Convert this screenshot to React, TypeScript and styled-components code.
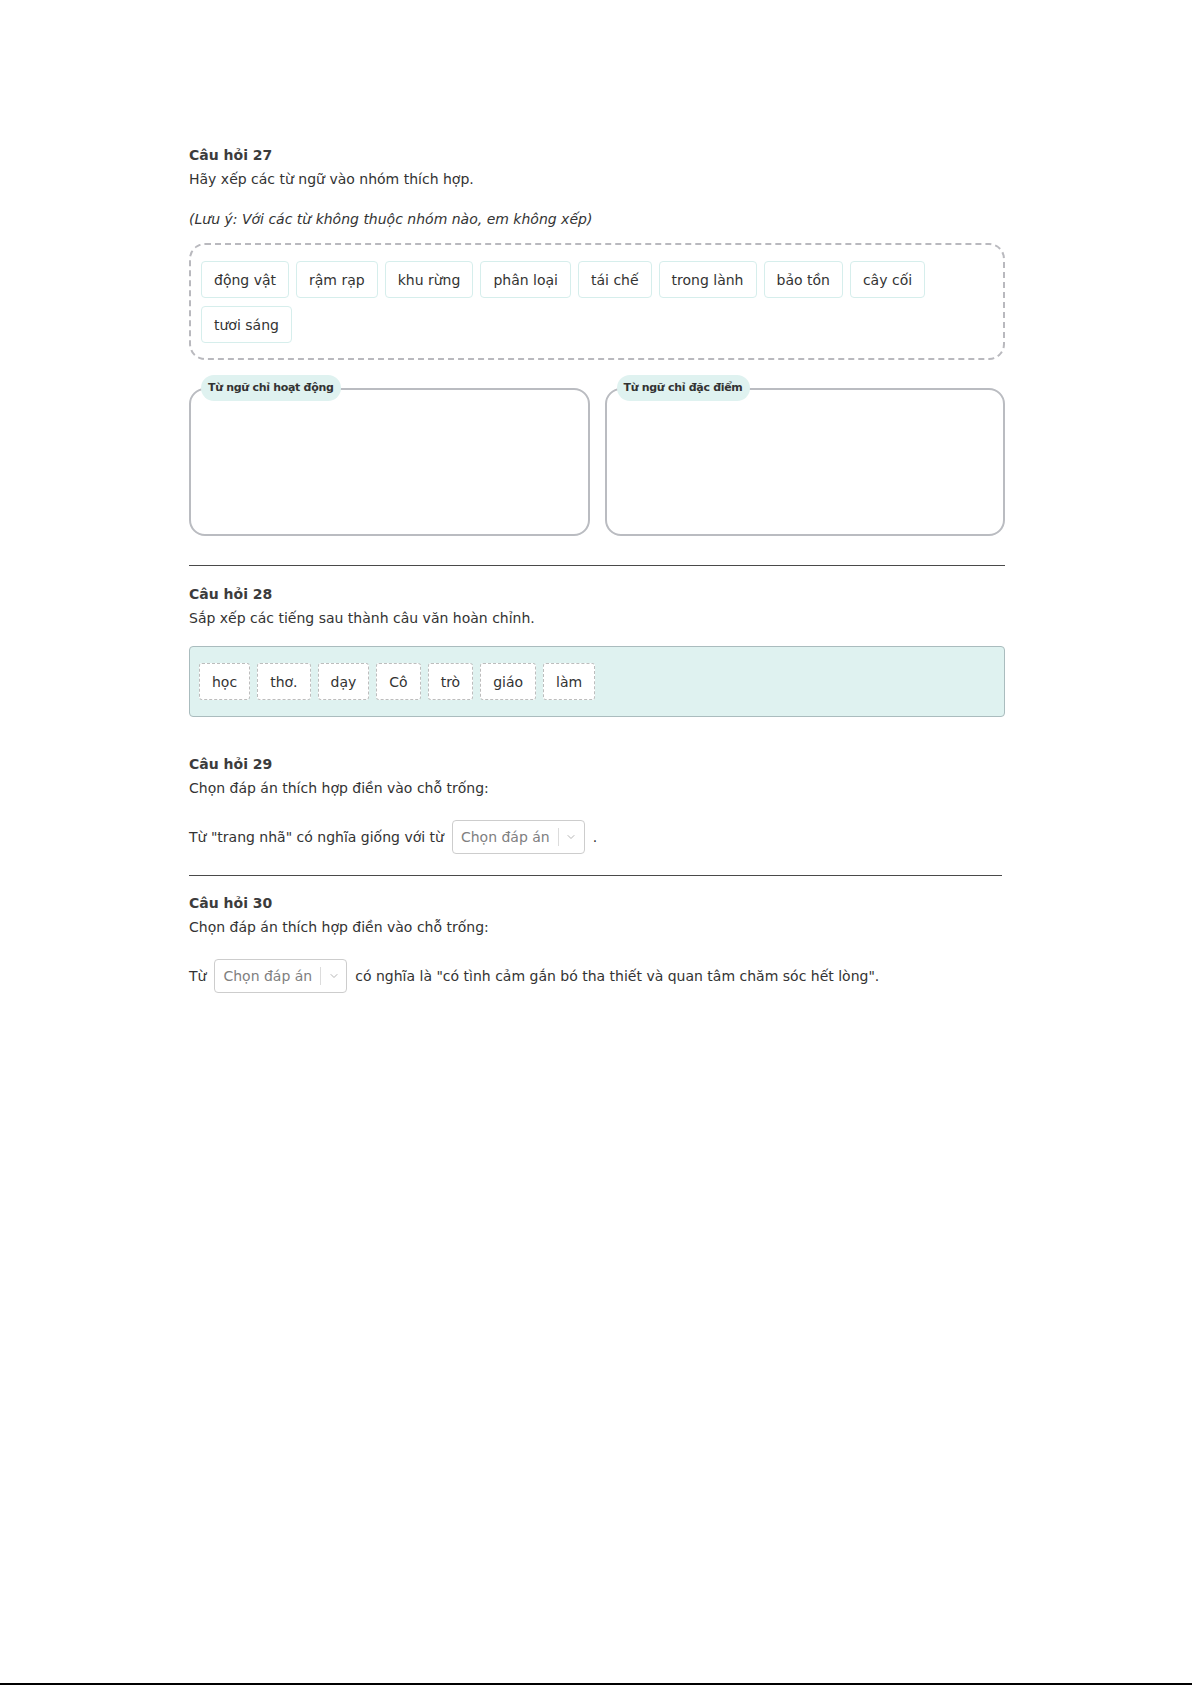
import styled, { createGlobalStyle } from 'styled-components'

const GlobalStyle = createGlobalStyle`
  html, body {
    margin: 0;
    padding: 0;
    background: #fff;
  }
  body {
    font-family: "DejaVu Sans", "Liberation Sans", sans-serif;
    color: #333;
  }
`

const WORDS_27 = ['động vật', 'rậm rạp', 'khu rừng', 'phân loại', 'tái chế', 'trong lành', 'bảo tồn', 'cây cối', 'tươi sáng']
const GROUPS_27 = ['Từ ngữ chỉ hoạt động', 'Từ ngữ chỉ đặc điểm']
const WORDS_28 = ['học', 'thơ.', 'dạy', 'Cô', 'trò', 'giáo', 'làm']

const ChevronDown = () => (
  <svg width="10" height="10" viewBox="0 0 10 10" fill="none">
    <path d="M2 3.5 L5 6.5 L8 3.5" stroke="#b5b5b5" strokeWidth="1" strokeLinecap="round" />
  </svg>
)

const AnswerSelect = () => (
  <SelectBox>
    <SelectText>Chọn đáp án</SelectText>
    <SelectDivider />
    <SelectArrow>
      <ChevronDown />
    </SelectArrow>
  </SelectBox>
)

const App = () => {
  return (
    <Page>
      <GlobalStyle />
      <Content>
        <Question>
          <Title>Câu hỏi 27</Title>
          <Prompt>Hãy xếp các từ ngữ vào nhóm thích hợp.</Prompt>
          <Note>(Lưu ý: Với các từ không thuộc nhóm nào, em không xếp)</Note>
          <WordPool>
            {WORDS_27.map(word => (
              <WordChip key={word}>{word}</WordChip>
            ))}
          </WordPool>
          <GroupGrid>
            {GROUPS_27.map(group => (
              <GroupBox key={group}>
                <GroupLabel>{group}</GroupLabel>
              </GroupBox>
            ))}
          </GroupGrid>
        </Question>

        <Divider />

        <Question>
          <Title>Câu hỏi 28</Title>
          <Prompt>Sắp xếp các tiếng sau thành câu văn hoàn chỉnh.</Prompt>
          <OrderTray>
            {WORDS_28.map(word => (
              <OrderChip key={word}>{word}</OrderChip>
            ))}
          </OrderTray>
        </Question>

        <Question $gap={35}>
          <Title>Câu hỏi 29</Title>
          <Prompt>Chọn đáp án thích hợp điền vào chỗ trống:</Prompt>
          <FillRow>
            <span>Từ "trang nhã" có nghĩa giống với từ</span>
            <AnswerSelect />
            <span>.</span>
          </FillRow>
        </Question>

        <Divider $short />

        <Question>
          <Title>Câu hỏi 30</Title>
          <Prompt>Chọn đáp án thích hợp điền vào chỗ trống:</Prompt>
          <FillRow>
            <span>Từ</span>
            <AnswerSelect />
            <span>có nghĩa là "có tình cảm gắn bó tha thiết và quan tâm chăm sóc hết lòng".</span>
          </FillRow>
        </Question>
      </Content>
    </Page>
  )
}

export default App

const Page = styled.div`
  box-sizing: border-box;
  height: 1685px;
  border-bottom: 2px solid #000;
  overflow: hidden;
`

const Content = styled.main`
  width: 816px;
  margin-left: 189px;
  padding-top: 143px;
  font-size: 14px;
  line-height: 24px;
`

const Question = styled.section<{ $gap?: number }>`
  margin-top: ${({ $gap }) => $gap ?? 0}px;
`

const Title = styled.h3`
  margin: 0;
  font-size: 14px;
  font-weight: 700;
  line-height: 24px;
  color: #3c3c3c;
`

const Prompt = styled.p`
  margin: 0;
  line-height: 24px;
`

const Note = styled.p`
  margin: 16px 0 0;
  font-style: italic;
  line-height: 24px;
`

const WordPool = styled.div`
  box-sizing: border-box;
  display: flex;
  flex-wrap: wrap;
  gap: 8px 7px;
  margin-top: 12px;
  padding: 16px 10px 15px;
  border: 2px dashed #b9b9be;
  border-radius: 16px;
`

const WordChip = styled.span`
  box-sizing: border-box;
  display: inline-flex;
  align-items: center;
  height: 37px;
  padding: 0 12px;
  border: 1px solid #d6eeec;
  border-radius: 4px;
  background: #fff;
`

const GroupGrid = styled.div`
  display: grid;
  grid-template-columns: 1fr 1fr;
  gap: 15px;
  margin-top: 28px;
`

const GroupBox = styled.div`
  box-sizing: border-box;
  position: relative;
  height: 148px;
  border: 2px solid #babcc1;
  border-radius: 16px;
  background: #fff;
`

const GroupLabel = styled.span`
  position: absolute;
  top: -15px;
  left: 10px;
  display: inline-flex;
  align-items: center;
  height: 26px;
  padding: 0 7px;
  border-radius: 13px;
  background: #dff2f0;
  font-size: 11px;
  font-weight: 700;
  letter-spacing: -0.3px;
  color: #333;
`

const Divider = styled.hr<{ $short?: boolean }>`
  width: ${({ $short }) => ($short ? '813px' : '100%')};
  margin: ${({ $short }) => ($short ? '21px 0 15px' : '29px 0 16px')};
  border: 0;
  border-top: 1px solid #4a4a4a;
`

const OrderTray = styled.div`
  box-sizing: border-box;
  display: flex;
  flex-wrap: wrap;
  gap: 7px;
  margin-top: 16px;
  padding: 16px 9px;
  border: 1px solid #aabcbe;
  border-radius: 4px;
  background: #dff2f0;
`

const OrderChip = styled.span`
  box-sizing: border-box;
  display: inline-flex;
  align-items: center;
  height: 37px;
  padding: 0 12px;
  border: 1px dashed #bdbdbd;
  border-radius: 3px;
  background: #fff;
`

const FillRow = styled.div`
  display: flex;
  align-items: center;
  gap: 8px;
  margin-top: 20px;
`

const SelectBox = styled.span`
  box-sizing: border-box;
  display: inline-flex;
  align-items: center;
  height: 34px;
  padding-left: 8px;
  border: 1px solid #cdcdcd;
  border-radius: 4px;
  background: #fff;
`

const SelectText = styled.span`
  color: #808080;
  padding-right: 8px;
`

const SelectDivider = styled.span`
  width: 1px;
  height: 18px;
  background: #dcdcdc;
`

const SelectArrow = styled.span`
  display: inline-flex;
  align-items: center;
  justify-content: center;
  width: 25px;
`
